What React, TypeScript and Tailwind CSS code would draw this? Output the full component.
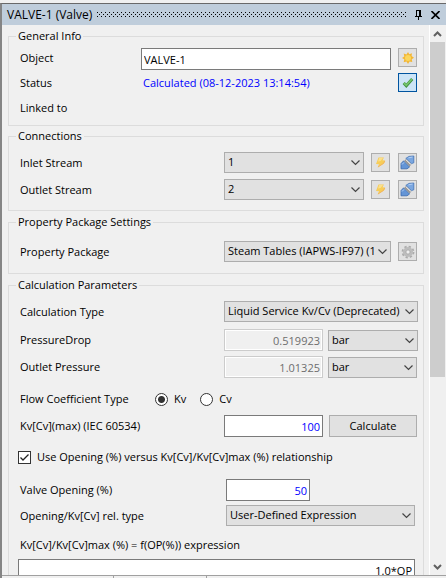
import React, { useState } from "react";

const FONT = "font-['Open_Sans','Noto_Sans',sans-serif]";

function Group({ title, className = "", children }: { title: string; className?: string; children: React.ReactNode }) {
  return (
    <fieldset className={`min-w-0 border border-[#dcdcdc] pl-[11px] pr-[6px] ${className}`}>
      <legend className="-ml-1 h-4 px-[2px] leading-4">{title}</legend>
      {children}
    </fieldset>
  );
}

function Select({ id, label, options, className = "" }: { id: string; label?: string; options: string[]; className?: string }) {
  return (
    <div className={`relative h-[21px] min-w-0 ${className}`}>
      <select
        id={id}
        aria-label={label}
        className="h-full w-full appearance-none border border-[#adadad] bg-[#e1e1e1] pl-[3px] pr-4 outline-none"
      >
        {options.map((o) => (
          <option key={o}>{o}</option>
        ))}
      </select>
      <svg className="pointer-events-none absolute right-1 top-[7px] h-[7px] w-[9px]" viewBox="0 0 9 7" fill="none" stroke="#444" strokeWidth="1.2">
        <path d="M0.5 1.5 L4.5 5.5 L8.5 1.5" />
      </svg>
    </div>
  );
}

function IconButton({ label, checked = false, children }: { label: string; checked?: boolean; children: React.ReactNode }) {
  return (
    <button
      type="button"
      aria-label={label}
      className={`flex size-[19px] shrink-0 items-center justify-center border ${
        checked ? "border-[#0054a0] bg-[#cce4f7]" : "border-[#adadad] bg-[#e1e1e1]"
      }`}
    >
      {children}
    </button>
  );
}

function Bolt() {
  return (
    <svg width="11" height="11" viewBox="0 0 11 11">
      <path d="M3.5 0.5 L9 0.5 L7.5 3.2 L10.2 3.5 L9 6.5 L2.5 10.5 L4 7.2 L1 7 Z" fill="#f7cd58" />
      <path d="M4.2 1 L8 1 L5.6 4 L3 4.5 Z" fill="#fbe08a" />
      <path d="M9.8 4 L8.6 6.3 L3 10" fill="none" stroke="#efb060" strokeWidth="0.9" />
    </svg>
  );
}

function Plug() {
  return (
    <svg width="15" height="15" viewBox="0 0 15 15">
      <path d="M5.8 3.4 L9 1.4 L13.8 1 L13.8 7.8 L11.5 8.6 Z" fill="#7ba7e0" stroke="#4374b8" strokeWidth="0.8" />
      <path d="M1 13.8 L1 8.6 L3.6 5.8 L9.6 12 L7 13.8 Z" fill="#6495d6" stroke="#3768ae" strokeWidth="0.8" />
      <path d="M5 5 L10.5 10.5" stroke="#999" strokeWidth="2.6" />
      <path d="M6 4.8 L10.8 9.6" stroke="#eee" strokeWidth="1" />
      <path d="M2 9.5 L4 7.4 M8.5 2.8 L12.5 2" stroke="#b4d0f4" />
    </svg>
  );
}

function Gear() {
  return (
    <svg width="14" height="14" viewBox="0 0 14 14">
      <circle cx="7" cy="7" r="5.4" fill="none" stroke="#aaa" strokeWidth="2" strokeDasharray="2.2 2.04" />
      <circle cx="7" cy="7" r="3.6" fill="none" stroke="#bcbcbc" strokeWidth="3" />
      <circle cx="7" cy="7" r="2" fill="#eee" stroke="#999" strokeWidth="0.6" />
    </svg>
  );
}

function Label({ htmlFor, children }: { htmlFor?: string; children: React.ReactNode }) {
  return (
    <label htmlFor={htmlFor} className="w-[204px] shrink-0 leading-5">
      {children}
    </label>
  );
}

function Radio({ name, label, checked, onChange }: { name: string; label: string; checked: boolean; onChange: () => void }) {
  return (
    <label className="flex items-center gap-[6px]">
      <input
        type="radio"
        name={name}
        checked={checked}
        onChange={onChange}
        className="size-[13px] appearance-none rounded-full border border-[#333] bg-white checked:bg-[radial-gradient(circle,#333_3px,white_4px)]"
      />
      {label}
    </label>
  );
}

const FIELD = "h-[22px] min-w-0 border border-[#7a7a7a] bg-white px-[2px] outline-none";
const LOCKED = "h-[22px] w-[99px] min-w-0 border border-[#cccccc] bg-[#f0f0f0] px-[2px] text-right text-[#6d6d6d] shadow-[inset_0_0_0_1px_white] outline-none";

export default function App() {
  const [coef, setCoef] = useState("Kv");
  return (
    <div className={`flex h-screen flex-col overflow-hidden bg-[#f0f0f0] text-[11px] text-black ${FONT}`}>
      <div className="h-[3px] shrink-0" />
      <div className="flex min-h-0 flex-1 flex-col border-l-2 border-t border-[#696969] border-l-[#858585]">
        <header className="flex h-[21px] shrink-0 items-center bg-[#bfcddb] pl-[5px] pr-[6px]">
          <h1 className="w-[86px] shrink-0 whitespace-nowrap text-[12px] leading-5">VALVE-1 (Valve)</h1>
          <svg className="ml-1 mr-[9px] h-[5px] min-w-0 flex-1" aria-hidden="true" shapeRendering="crispEdges">
            <defs>
              <pattern id="grip" width="4" height="4" patternUnits="userSpaceOnUse">
                <rect width="1" height="1" />
                <rect x="2" y="2" width="1" height="1" />
              </pattern>
            </defs>
            <rect width="100%" height="5" fill="url(#grip)" />
          </svg>
          <button type="button" aria-label="Pin" className="mr-[9px]">
            <svg width="7" height="10" viewBox="0 0 7 10" shapeRendering="crispEdges">
              <path d="M1 0h5v6h1v1H4v3H3V7H0V6h1zM2 1v5h2V1z" fillRule="evenodd" />
            </svg>
          </button>
          <button type="button" aria-label="Close">
            <svg width="9" height="8" viewBox="0 0 9 8" stroke="black" strokeWidth="1.6">
              <path d="M0.5 0 L8.5 8 M8.5 0 L0.5 8" />
            </svg>
          </button>
        </header>

        <div className="flex min-h-0 flex-1">
          <main className="min-w-0 flex-1 overflow-hidden pl-[6px] pr-[5px] pt-[3px]">
            <Group title="General Info" className="h-[98px]">
              <div className="mt-1 flex">
                <label htmlFor="object" className="w-[121px] shrink-0 leading-5">Object</label>
                <input id="object" defaultValue="VALVE-1" className={`${FIELD} flex-1`} />
                <div className="ml-[7px]">
                  <IconButton label="Activate">
                    <svg width="12" height="12" viewBox="0 0 12 12">
                      <path d="M6 0 L7.3 2.3 L10 1.3 L9.6 4.1 L12 5.8 L9.7 7.3 L10.3 10.1 L7.5 9.6 L6 12 L4.5 9.6 L1.7 10.2 L2.3 7.3 L0 6 L2.3 4.4 L1.7 1.6 L4.5 2.4 Z" fill="#f3b735" />
                      <circle cx="6" cy="6" r="3" fill="#fbd65c" />
                    </svg>
                  </IconButton>
                </div>
              </div>
              <div className="mt-[3px] flex">
                <span className="w-[123px] shrink-0 leading-5">Status</span>
                <span className="flex-1 leading-5 text-[#0000ff]">Calculated (08-12-2023 13:14:54)</span>
                <IconButton label="Calculated" checked>
                  <svg width="12" height="11" viewBox="0 0 12 11">
                    <path d="M1.7 6 L4.3 8.7 L10.2 2" fill="none" stroke="#3f8f3f" strokeWidth="3" />
                    <path d="M1.9 6 L4.3 8.3 L10 2" fill="none" stroke="#74c46c" strokeWidth="1.8" />
                  </svg>
                </IconButton>
              </div>
              <p className="mt-[5px] leading-5">Linked to</p>
            </Group>

            <Group title="Connections" className="mt-[2px] h-[83px]">
              {[["Inlet Stream", "1"], ["Outlet Stream", "2"]].map(([label, value], i) => (
                <div key={label} className={`flex items-center ${i === 0 ? "mt-2" : "mt-[6px]"}`}>
                  <Label htmlFor={`stream${i}`}>{label}</Label>
                  <Select id={`stream${i}`} options={[value]} className="flex-1" />
                  <div className="ml-[7px] flex gap-2">
                    <IconButton label={`Create ${label}`}><Bolt /></IconButton>
                    <IconButton label={`Disconnect ${label}`}><Plug /></IconButton>
                  </div>
                </div>
              ))}
            </Group>

            <Group title="Property Package Settings" className="mt-[3px] h-[60px]">
              <div className="mt-[11px] flex items-center">
                <Label htmlFor="package">Property Package</Label>
                <Select id="package" options={["Steam Tables (IAPWS-IF97) (1"]} className="mr-[7px] flex-1" />
                <IconButton label="Configure"><Gear /></IconButton>
              </div>
            </Group>

            <Group title="Calculation Parameters" className="mt-[3px] h-[320px]">
              <div className="-mr-px mt-2 flex items-center">
                <Label htmlFor="calctype">Calculation Type</Label>
                <Select id="calctype" options={["Liquid Service Kv/Cv (Deprecated)"]} className="flex-1" />
              </div>
              <div className="-mr-px mt-[7px] flex items-center">
                <Label htmlFor="drop">PressureDrop</Label>
                <input id="drop" readOnly value="0.519923" className={LOCKED} />
                <Select id="dropunit" label="Pressure drop unit" options={["bar"]} className="ml-[5px] flex-1" />
              </div>
              <div className="mt-[5px] flex items-center">
                <Label htmlFor="outp">Outlet Pressure</Label>
                <input id="outp" readOnly value="1.01325" className={LOCKED} />
                <Select id="outunit" label="Outlet pressure unit" options={["bar"]} className="ml-[5px] flex-1" />
              </div>
              <div className="mt-[11px] flex h-5 items-center gap-[14px]" role="radiogroup" aria-label="Flow Coefficient Type">
                <span className="w-[121px]">Flow Coefficient Type</span>
                <Radio name="coef" label="Kv" checked={coef === "Kv"} onChange={() => setCoef("Kv")} />
                <Radio name="coef" label="Cv" checked={coef === "Cv"} onChange={() => setCoef("Cv")} />
              </div>
              <div className="mt-[6px] flex items-center">
                <Label htmlFor="kvmax">Kv[Cv](max) (IEC 60534)</Label>
                <input id="kvmax" defaultValue="100" className={`${FIELD} w-[99px] text-right text-[#0000ff]`} />
                <button type="button" className="ml-[6px] h-[22px] flex-1 border border-[#adadad] bg-[#e1e1e1]">Calculate</button>
              </div>
              <label className="-ml-[2px] mt-[10px] flex h-5 items-center gap-[6px] whitespace-nowrap">
                <input type="checkbox" defaultChecked className="peer sr-only" />
                <svg className="size-[13px] shrink-0 border border-[#333] bg-white text-transparent peer-checked:text-[#222]" viewBox="0 0 11 11" fill="none" stroke="currentColor" strokeWidth="1.3">
                  <path d="M1.5 5.5 L4 8 L9.5 2.5" />
                </svg>
                Use Opening (%) versus Kv[Cv]/Kv[Cv]max (%) relationship
              </label>
              <div className="mt-[12px] flex items-center">
                <Label htmlFor="opening">Valve Opening (%)</Label>
                <input id="opening" defaultValue="50" className={`${FIELD} ml-[2px] w-[84px] text-right text-[#0000ff]`} />
              </div>
              <div className="mt-1 flex items-center">
                <Label htmlFor="reltype">Opening/Kv[Cv] rel. type</Label>
                <Select id="reltype" options={["User-Defined Expression"]} className="ml-[2px] mr-[2px] flex-1" />
              </div>
              <label htmlFor="expr" className="mt-[9px] block leading-5">Kv[Cv]/Kv[Cv]max (%) = f(OP(%)) expression</label>
              <div className="-ml-[2px] mr-[2px] mt-1 flex">
                <input id="expr" defaultValue="1.0*OP" className={`${FIELD} flex-1 text-right`} />
              </div>
            </Group>
          </main>

          <div className="flex w-[17px] shrink-0 flex-col border-l border-white pr-px">
            <button type="button" aria-label="Scroll up" className="flex h-[17px] shrink-0 items-center justify-center">
              <svg width="9" height="6" viewBox="0 0 9 6" fill="none" stroke="#606060" strokeWidth="2"><path d="M1 5 L4.5 1.5 L8 5" /></svg>
            </button>
            <div className="min-h-0 flex-1"><div className="h-[65%] bg-[#cdcdcd]" /></div>
            <button type="button" aria-label="Scroll down" className="flex h-[17px] shrink-0 items-center justify-center">
              <svg width="9" height="6" viewBox="0 0 9 6" fill="none" stroke="#606060" strokeWidth="2"><path d="M1 1 L4.5 4.5 L8 1" /></svg>
            </button>
          </div>
        </div>

        <footer className="flex h-[3px] shrink-0 border-t border-[#a0a0a0]">
          <span className="w-[112px] border-r border-[#a0a0a0]" />
          <span className="w-[93px] border-r border-[#a0a0a0]" />
        </footer>
      </div>
    </div>
  );
}
